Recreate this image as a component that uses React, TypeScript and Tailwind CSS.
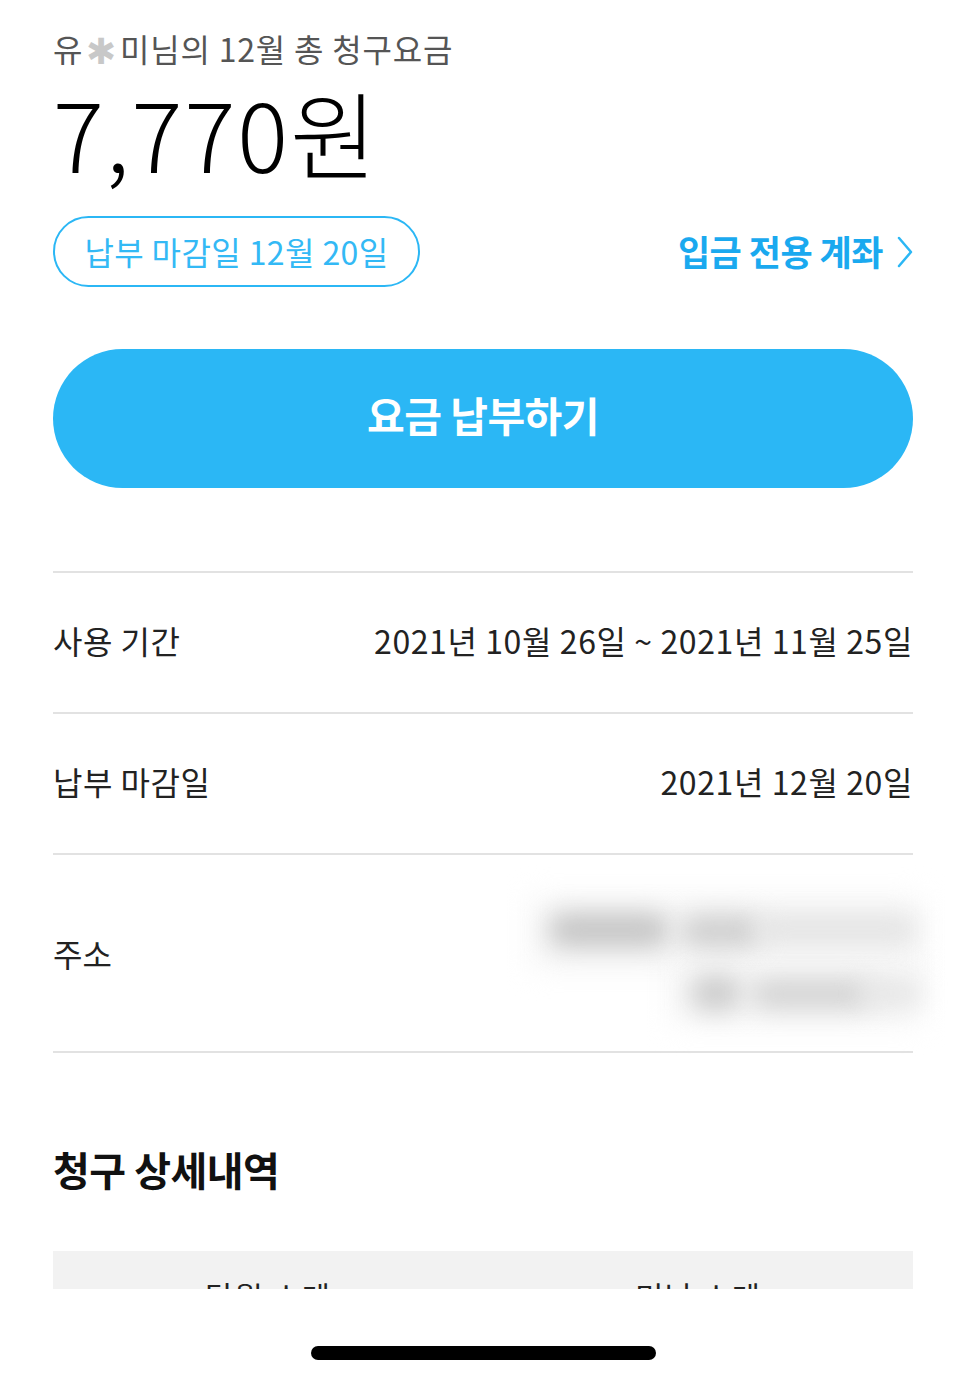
const font = { fontFamily: '"Noto Sans CJK KR", "Noto Sans", sans-serif' }

function Row({ label, value }: { label: string; value: string }) {
  return (
    <div className="flex items-center justify-between h-[141px] pb-[6px] border-b-2 border-[#e2e2e2]">
      <span className="text-[32px] text-[#222] tracking-[0.5px]">{label}</span>
      <span className="text-[32px] text-[#222] tracking-[0.6px]">{value}</span>
    </div>
  )
}

export default function App() {
  return (
    <div className="w-[966px] h-[1380px] bg-white relative overflow-hidden" style={font}>
      <div className="px-[53px] pt-[24px]">
        {/* header */}
        <p className="text-[32px] leading-[48px] text-[#555] flex items-center tracking-[0.8px]">
          <span>유</span>
          <span className="text-[#c8c8c8] text-[36px] leading-[36px] mx-[3px]">✱</span>
          <span>미님의 12월 총 청구요금</span>
        </p>
        <p className="text-[95px] leading-[120px] font-light text-black tracking-[2px]">7,770원</p>

        <div className="flex items-center justify-between mt-[24px]">
          <div className="h-[71px] w-[367px] rounded-full border-[2.5px] border-[#2bb7f5] flex items-center justify-center">
            <span className="text-[32px] text-[#33b9f5] tracking-[0.4px] -mt-[2px]">납부 마감일 12월 20일</span>
          </div>
          <div className="flex items-center gap-[14px] text-[#1aa9ef]">
            <span className="text-[35px] font-bold tracking-[-0.5px]">입금 전용 계좌</span>
            <svg width="16" height="32" viewBox="0 0 16 32" fill="none">
              <path d="M2 2 L14 16 L2 30" stroke="#2bb7f5" strokeWidth="2.5" strokeLinecap="round" strokeLinejoin="round" />
            </svg>
          </div>
        </div>

        <button className="mt-[62px] w-full h-[139px] rounded-full bg-[#2bb7f5] flex items-center justify-center">
          <span className="text-white text-[41px] font-bold tracking-[-0.5px] -mt-[8px]">요금 납부하기</span>
        </button>

        <div className="mt-[83px] border-t-2 border-[#e2e2e2]">
          <Row label="사용 기간" value="2021년 10월 26일 ~ 2021년 11월 25일" />
          <Row label="납부 마감일" value="2021년 12월 20일" />
          <div className="flex items-center justify-between h-[198px] border-b-2 border-[#e2e2e2]">
            <span className="text-[32px] text-[#222]">주소</span>
            <div className="relative w-[390px] h-[140px] mr-[-8px]">
              <div className="absolute left-[0px] top-[15px] w-[390px] h-[70px] bg-[#f5f5f5] blur-[14px]" />
              <div className="absolute left-[140px] top-[75px] w-[250px] h-[65px] bg-[#f5f5f5] blur-[14px]" />
              <div className="absolute left-[18px] top-[30px] w-[120px] h-[34px] rounded-full bg-[#c6c6c6] blur-[12px]" />
              <div className="absolute left-[150px] top-[32px] w-[80px] h-[32px] rounded-full bg-[#cfcfcf] blur-[12px]" />
              <div className="absolute left-[225px] top-[34px] w-[160px] h-[24px] rounded-full bg-[#e2e2e2] blur-[12px]" />
              <div className="absolute left-[160px] top-[92px] w-[50px] h-[36px] rounded-full bg-[#cdcdcd] blur-[12px]" />
              <div className="absolute left-[220px] top-[96px] w-[120px] h-[30px] rounded-full bg-[#d4d4d4] blur-[12px]" />
              <div className="absolute left-[330px] top-[98px] w-[60px] h-[24px] rounded-full bg-[#e5e5e5] blur-[12px]" />
            </div>
          </div>
        </div>

        <h2 className="mt-[88px] text-[40px] font-bold text-[#111] tracking-[-0.5px] leading-[56px]">청구 상세내역</h2>

        <div className="mt-[54px] h-[38px] overflow-hidden bg-[#f2f2f2]">
          <div className="grid grid-cols-2 pt-[22px]">
            <span className="text-center text-[31px] text-[#222] tracking-[1px]">당월 소계</span>
            <span className="text-center text-[31px] text-[#222] tracking-[1px]">미납 소계</span>
          </div>
        </div>
      </div>

      <div className="absolute left-[311px] top-[1346px] w-[345px] h-[14px] rounded-full bg-black" />
    </div>
  )
}
